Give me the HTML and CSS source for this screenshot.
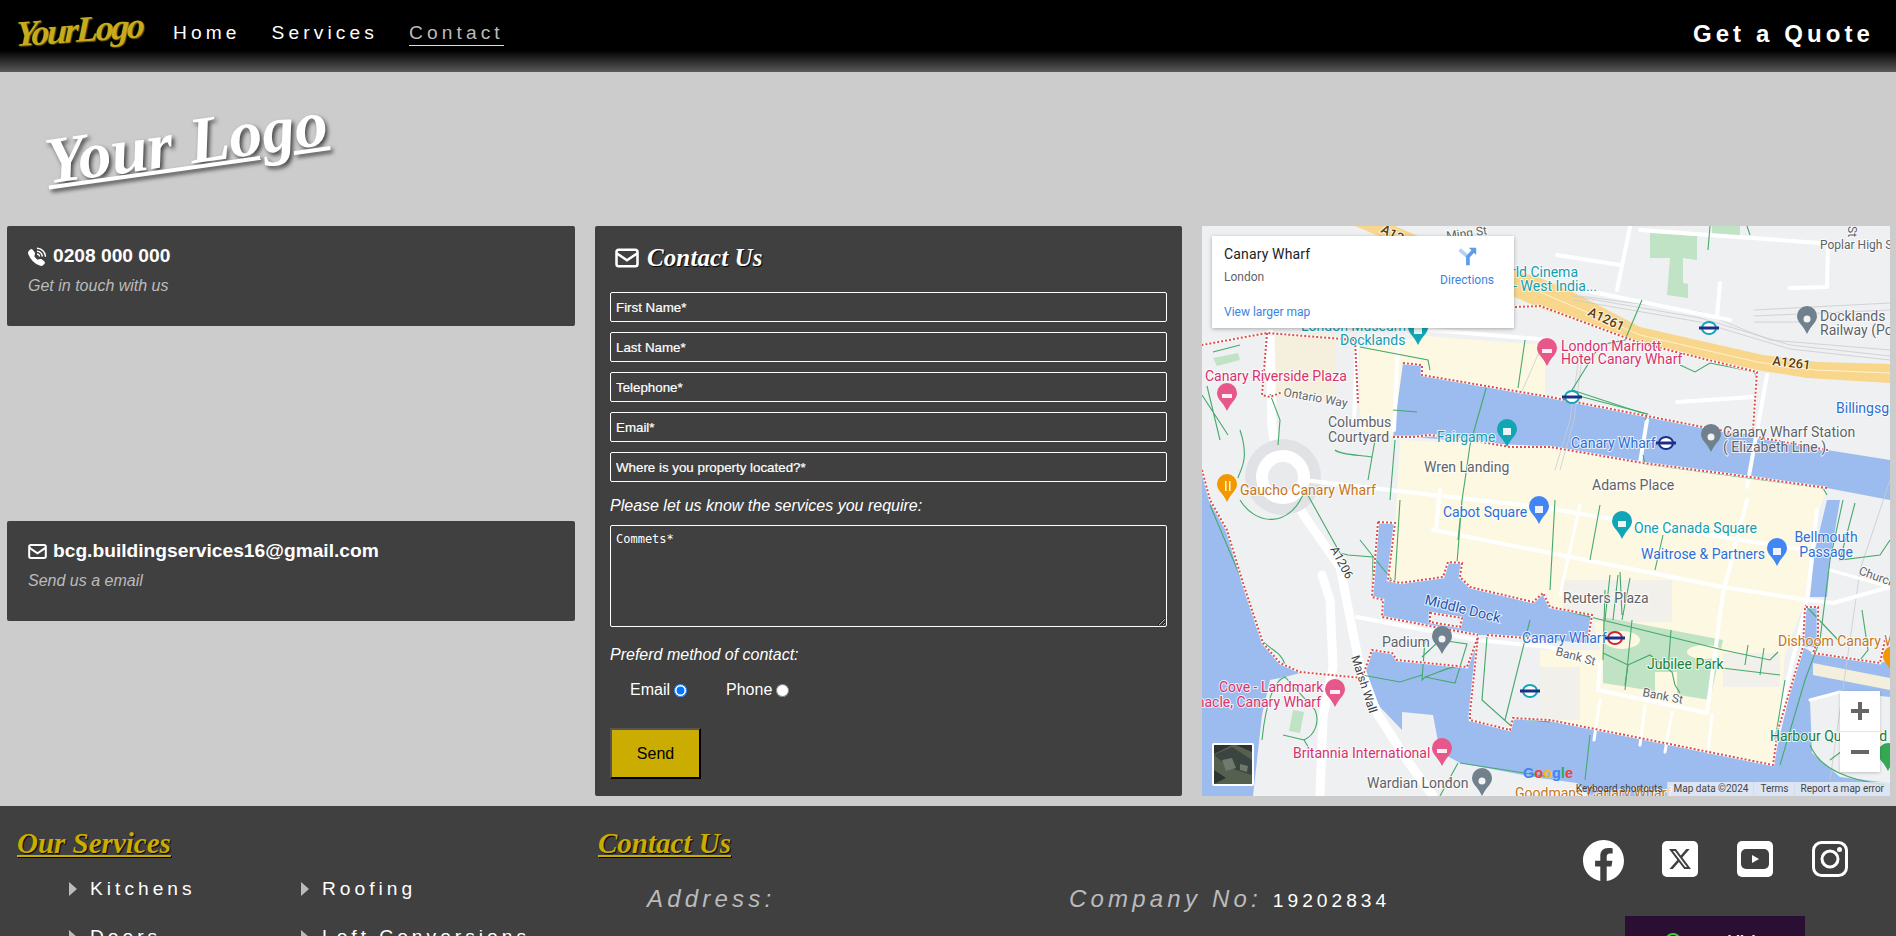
FILE: index.html
```html
<!DOCTYPE html>
<html lang="en">
<head>
<meta charset="utf-8">
<title>Contact</title>
<link rel="stylesheet" href="styles.css">
</head>
<body>
<header class="topbar">
  <a class="toplogo">YourLogo</a>
  <nav class="nav">
    <a>Home</a>
    <a>Services</a>
    <a class="active">Contact</a>
  </nav>
  <a class="quote">Get a Quote</a>
</header>

<div class="brand"><span class="biglogo">Your Logo</span></div>

<main class="columns">
  <section class="side">
    <div class="card">
      <h3 class="card-title">
        <svg class="ico" viewBox="0 0 18 18"><path d="M1.885 2.511a1.745 1.745 0 0 1 2.61.163L6.29 4.98c.329.423.445.974.315 1.494l-.547 2.19a.68.68 0 0 0 .178.643l2.457 2.457a.68.68 0 0 0 .644.178l2.189-.547a1.75 1.75 0 0 1 1.494.315l2.306 1.794c.829.645.905 1.87.163 2.611l-1.034 1.034c-.74.74-1.846 1.065-2.877.702a18.6 18.6 0 0 1-7.01-4.42 18.6 18.6 0 0 1-4.42-7.009c-.362-1.03-.037-2.137.703-2.877z"/><path class="arc" d="M8.500 1.200a8 8 0 0 1 8 8M8.500 4a5 5 0 0 1 5 5M8.500 6.700a2.400 2.400 0 0 1 2.400 2.400"/></svg>
        0208 000 000
      </h3>
      <p class="card-sub">Get in touch with us</p>
    </div>
    <div class="card">
      <h3 class="card-title">
        <svg class="ico env" viewBox="0 0 16 16"><rect x="1" y="2.500" width="14" height="11" rx="1.500"/><path d="M1.300 5L8 9.500L14.700 5"/></svg>
        bcg.buildingservices16@gmail.com
      </h3>
      <p class="card-sub">Send us a email</p>
    </div>
  </section>

  <form class="form">
    <h2 class="form-title">
      <svg class="form-ico env" viewBox="0 0 16 16"><rect x="1" y="2.500" width="14" height="11" rx="1.500"/><path d="M1.300 5L8 9.500L14.700 5"/></svg>
      <span class="script">Contact Us</span>
    </h2>
    <input class="field" type="text" placeholder="First Name*">
    <input class="field" type="text" placeholder="Last Name*">
    <input class="field" type="text" placeholder="Telephone*">
    <input class="field" type="text" placeholder="Email*">
    <input class="field" type="text" placeholder="Where is you property located?*">
    <p class="form-label first">Please let us know the services you require:</p>
    <textarea class="comments" placeholder="Commets*"></textarea>
    <p class="form-label second">Preferd method of contact:</p>
    <div class="radios">
      <label class="radio">Email <input type="radio" name="m" checked></label>
      <label class="radio">Phone <input type="radio" name="m"></label>
    </div>
    <button class="send" type="button">Send</button>
  </form>

  <section class="map">
    <svg class="map-svg" viewBox="1202 226 688 570" width="688" height="570">
      <defs>
        <path id="pin" d="M0-14a10 10 0 0 1 10 10c0 6.500-6 9-10 18c-4-9-10-11.500-10-18a10 10 0 0 1 10-10z"/>
        <g id="tube"><ellipse cx="0" cy="0" rx="7" ry="6" class="tube-ring"/><rect x="-10" y="-1.500" width="20" height="3" class="tube-bar"/></g>
        <g id="bounds">
          <path d="M1267 333L1262 395L1270 397L1282 392M1358 403L1355 340L1267 333L1202 345"/>
          <path d="M1403 363L1422 365L1422 375L1550 397L1703 427L1827 450L1827 452M1393 437L1413 437L1430 435L1487 443L1510 447L1550 447L1643 463L1750 477L1827 488"/>
          <path d="M1443 310L1540 306L1640 343L1757 372L1753 430"/>
          <path d="M1202 470L1210 500L1227 530L1243 583L1263 643L1280 663L1300 672L1362 678L1372 650L1392 653L1397 660L1427 663L1467 667L1478 637L1470 713L1470 720L1510 730L1513 718L1550 720L1640 738L1773 765L1778 730L1793 680L1803 647L1805 607L1818 607L1818 640L1813 653L1880 663L1885 640"/>
          <path d="M1378 522L1395 523L1388 580L1400 583L1443 577L1448 562L1462 563L1460 577L1470 587L1533 602L1543 593L1550 607L1592 615L1588 640M1378 522L1372 597L1383 600L1382 617L1478 635M1487 635L1550 640"/>
          <path d="M1430 613L1462 618L1460 627L1430 622Z"/>
        </g>
      </defs>

      <rect class="land" x="1202" y="226" width="688" height="570"/>
      <polygon class="tan" points="1267,333 1335,333 1335,395 1270,397"/>
      <polygon class="beige" points="1360,348 1425,336 1545,345 1545,395 1422,375 1422,365 1403,363 1395,425 1393,437 1360,430"/>
      <polygon class="beige" points="1400,440 1550,447 1643,463 1750,477 1827,488 1812,530 1805,600 1785,655 1775,765 1700,755 1600,735 1540,722 1540,650 1600,650 1592,615 1550,607 1547,593 1533,602 1470,587 1460,577 1443,577 1400,583 1388,580 1395,523"/>
      <rect class="land-soft" x="1563" y="580" width="109" height="42"/>
      <rect class="land-soft" x="1540" y="667" width="40" height="53"/>
      <rect class="land-soft" x="1723" y="653" width="57" height="34"/>
      <polygon class="park" points="1603,617 1723,640 1710,700 1603,683"/>
      <ellipse class="beige" cx="1622" cy="640" rx="18" ry="9"/>
      <ellipse class="beige" cx="1705" cy="652" rx="18" ry="7"/>
      <rect class="beige" x="1655" y="672" width="22" height="22"/>
      <polygon class="park" points="1650,233 1697,236 1697,260 1683,258 1683,283 1688,284 1688,298 1667,295 1670,258 1650,258"/>
      <rect class="park" x="1712" y="226" width="28" height="9"/>
      <polygon class="park" points="1213,358 1238,353 1240,360 1217,366"/>
      <polygon class="park" points="1293,710 1304,712 1300,733 1289,731"/>

      <polygon class="water" points="1403,363 1422,365 1422,375 1550,397 1703,427 1827,450 1890,460 1890,500 1827,488 1750,477 1643,463 1550,447 1487,443 1413,437 1393,437"/>
      <polygon class="water" points="1202,470 1210,500 1227,530 1243,583 1263,643 1280,663 1300,673 1285,677 1270,680 1262,715 1253,796 1202,796"/>
      <polygon class="water" points="1378,522 1395,523 1388,580 1400,583 1443,577 1448,562 1462,563 1460,577 1470,587 1533,602 1543,593 1550,607 1592,615 1588,643 1550,640 1487,635 1478,635 1382,617 1383,600 1372,597"/>
      <polygon class="water" points="1372,650 1392,653 1397,660 1427,663 1467,667 1478,637 1470,713 1470,720 1510,730 1513,718 1550,720 1640,738 1773,765 1793,680 1803,647 1813,653 1880,663 1890,660 1890,697 1840,692 1810,700 1812,753 1840,777 1890,783 1890,796 1590,796 1577,783 1540,778 1460,763 1440,752 1433,715 1402,712 1402,730 1380,707 1363,677"/>
      <polygon class="water" points="1827,500 1840,500 1830,560 1827,597 1810,597 1815,550"/>
      <polygon class="water" points="1805,607 1818,607 1818,647 1805,647"/>
      <polygon class="land" points="1430,613 1462,618 1460,627 1430,622"/>
      <polygon class="pier" points="1813,663 1890,678 1890,690 1813,675"/>

      <polygon class="motorway" points="1355,226 1395,226 1450,250 1540,278 1573,292 1640,327 1763,355 1817,362 1890,364 1890,383 1807,378 1757,370 1640,343 1540,308 1510,295 1440,262"/>
      <polyline class="motorway-line" points="1540,292 1640,335 1757,362 1815,370 1890,373"/>

      <g class="rail">
        <path d="M1573 296L1700 318L1790 345L1890 356M1573 300L1700 322L1790 349L1890 360M1580 296L1700 312L1770 340L1890 350"/>
        <path d="M1754 310L1890 303M1754 316L1890 310M1754 322L1800 322"/>
        <path d="M1580 350L1570 420L1555 470M1583 350L1574 420L1560 470"/>
        <path d="M1890 480L1860 570L1830 780M1540 350L1520 396"/>
      </g>

      <g class="road road-wide">
        <path d="M1270 334L1272 427L1280 477L1307 520L1340 567L1353 633L1360 667L1377 713L1407 760L1433 796"/>
        <path d="M1322 575L1330 600L1333 667L1323 717L1320 796"/>
      </g>
      <circle class="ring" cx="1283" cy="477" r="38"/>
      <circle class="ring-in" cx="1283" cy="477" r="27"/>
      <circle class="ring-c" cx="1283" cy="477" r="15"/>
      <g class="road">
        <path d="M1303 480L1433 495L1540 507L1740 540L1820 552"/>
        <path d="M1433 530L1550 553L1723 587L1807 600L1833 603L1890 587"/>
        <path d="M1357 617L1477 640L1550 647L1600 663L1598 690L1707 713L1723 593L1747 500"/>
        <path d="M1817 510L1807 600L1780 713"/>
        <path d="M1440 490L1436 530M1647 420L1640 463M1767 375L1747 487"/>
        <path d="M1630 227L1617 290M1557 255L1620 265M1583 290L1730 320M1640 230L1820 243M1828 243L1827 287L1790 288M1720 283L1717 317"/>
        <path d="M1677 402L1753 397M1430 330L1550 340M1398 345L1394 430M1357 348L1354 420"/>
      </g>
      <g class="road road-thin">
        <path d="M1600 700L1594 740M1645 706L1640 745M1672 712L1665 752M1712 715L1708 752M1580 505L1560 595M1830 570L1890 587M1810 700L1840 692"/>
      </g>

      <g class="paths">
        <path d="M1240 500C1255 525 1290 530 1305 490L1340 553L1348 555L1373 557L1372 597M1360 540L1392 580"/>
        <path d="M1202 395L1228 435M1207 386L1220 440M1213 352L1240 345M1240 430C1250 460 1240 470 1238 478"/>
        <path d="M1270 394L1280 420L1278 445M1335 450C1340 455 1360 455 1372 457M1375 440L1368 480M1395 440L1390 500"/>
        <path d="M1360 347L1428 360L1430 370M1525 340L1518 388M1487 385L1470 445M1417 412L1393 410"/>
        <path d="M1470 445L1465 480L1462 500L1458 540M1400 500L1395 580M1462 500L1457 563"/>
        <path d="M1210 505L1243 583L1262 640C1270 650 1282 652 1285 665"/>
        <path d="M1262 740C1266 700 1275 680 1285 677L1315 710C1320 722 1315 735 1304 740M1283 735L1304 740L1310 750"/>
        <path d="M1425 640L1422 680L1425 677L1455 683L1467 644L1440 640L1422 657M1425 677C1440 673 1447 665 1467 667M1422 675L1400 682L1362 675"/>
        <path d="M1487 637L1482 700L1510 725L1513 718L1550 722M1530 620L1505 720"/>
        <path d="M1458 763L1440 796M1460 763L1550 777"/>
        <path d="M1555 500L1550 590M1600 505L1590 560M1663 535L1655 570"/>
        <path d="M1550 607L1723 650L1770 660L1778 652M1605 590L1603 660M1632 620L1625 690M1671 630L1668 670M1748 645L1745 665M1764 648L1760 675"/>
        <path d="M1603 653L1628 665L1650 655L1672 672L1675 685L1680 693M1722 668L1780 675M1628 665L1625 685"/>
        <path d="M1610 575L1605 620M1618 575L1613 620M1620 572L1622 615M1630 578L1622 620"/>
        <path d="M1843 500L1830 560L1820 640L1805 680L1780 765M1855 503L1840 560L1880 555L1890 540"/>
        <path d="M1862 610L1868 650L1860 660M1838 640L1805 605M1785 680L1775 740"/>
        <path d="M1810 745C1820 770 1850 780 1885 785M1830 760L1850 745L1890 755M1590 735L1585 780"/>
        <path d="M1710 226L1708 250M1747 226L1750 235M1642 300L1625 340L1600 345L1572 390L1648 415L1645 420"/>
        <path d="M1680 365L1695 372L1710 363L1755 372L1757 385M1643 455L1645 464L1823 488L1827 495M1575 395L1648 414"/>
      </g>

      <use href="#bounds" class="bd-under"/>
      <use href="#bounds" class="bd"/>

      <text class="t sm gray" transform="translate(1447 240) rotate(-8)">Ming St</text>
      <text class="t brown" transform="translate(1380 232) rotate(28)">A1261</text>
      <text class="t teal" x="1578" y="277" text-anchor="end">World Cinema</text>
      <text class="t teal" x="1597" y="291" text-anchor="end">- West India...</text>
      <text class="t teal" x="1301" y="331">London Museum</text>
      <text class="t teal" x="1340" y="345">Docklands</text>
      <text class="t pink" x="1205" y="381">Canary Riverside Plaza</text>
      <text class="t sm gray" transform="translate(1283 396) rotate(10)">Ontario Way</text>
      <text class="t gray" x="1328" y="427">Columbus</text>
      <text class="t gray" x="1328" y="442">Courtyard</text>
      <text class="t teal" x="1437" y="442">Fairgame</text>
      <text class="t gray" x="1424" y="472">Wren Landing</text>
      <text class="t orange" x="1240" y="495">Gaucho Canary Wharf</text>
      <text class="t sm gray" x="1820" y="249">Poplar High St</text>
      <text class="t sm gray" transform="translate(1848 226) rotate(90)">St</text>
      <text class="t gray" x="1820" y="321">Docklands</text>
      <text class="t gray" x="1820" y="335">Railway (Poplar)</text>
      <text class="t brown" transform="translate(1587 315) rotate(25)">A1261</text>
      <text class="t brown" transform="translate(1772 365) rotate(7)">A1261</text>
      <text class="t pink" x="1561" y="351">London Marriott</text>
      <text class="t pink" x="1561" y="364">Hotel Canary Wharf</text>
      <text class="t blue" x="1836" y="413">Billingsgate</text>
      <text class="t blue" x="1571" y="448">Canary Wharf</text>
      <text class="t gray" x="1723" y="437">Canary Wharf Station</text>
      <text class="t gray" x="1723" y="452">( Elizabeth Line )</text>
      <text class="t gray" x="1592" y="490">Adams Place</text>
      <text class="t blue" x="1443" y="517">Cabot Square</text>
      <text class="t sm dark" transform="translate(1330 549) rotate(62)">A1206</text>
      <text class="t navy" transform="translate(1424 604) rotate(14)">Middle Dock</text>
      <text class="t gray" x="1382" y="647">Padium</text>
      <text class="t blue" x="1522" y="643">Canary Wharf</text>
      <text class="t sm dark" transform="translate(1351 657) rotate(72)">Marsh Wall</text>
      <text class="t pink" x="1219" y="692">Cove - Landmark</text>
      <text class="t pink" x="1321" y="707" text-anchor="end">Pinnacle, Canary Wharf</text>
      <text class="t pink" x="1293" y="758">Britannia International</text>
      <text class="t gray" x="1367" y="788">Wardian London</text>
      <text class="t orange" x="1515" y="798">Goodmans Canary Wharf</text>
      <text class="t teal" x="1634" y="533">One Canada Square</text>
      <text class="t blue" x="1641" y="559">Waitrose &amp; Partners</text>
      <text class="t blue" x="1826" y="542" text-anchor="middle">Bellmouth</text>
      <text class="t blue" x="1826" y="557" text-anchor="middle">Passage</text>
      <text class="t sm gray" transform="translate(1858 574) rotate(20)">Church St</text>
      <text class="t gray" x="1563" y="603">Reuters Plaza</text>
      <text class="t sm gray" transform="translate(1555 655) rotate(15)">Bank St</text>
      <text class="t sm gray" transform="translate(1642 696) rotate(11)">Bank St</text>
      <text class="t green" x="1647" y="669">Jubilee Park</text>
      <text class="t orange" x="1778" y="646">Dishoom Canary Wharf</text>
      <text class="t green" x="1770" y="741">Harbour Quay Yard</text>

      <use href="#pin" class="pin-teal" x="1418" y="331"/>
      <use href="#pin" class="pin-teal" x="1507" y="433"/>
      <use href="#pin" class="pin-teal" x="1622" y="525"/>
      <use href="#pin" class="pin-pink" x="1227" y="397"/>
      <use href="#pin" class="pin-pink" x="1547" y="352"/>
      <use href="#pin" class="pin-pink" x="1335" y="693"/>
      <use href="#pin" class="pin-pink" x="1442" y="752"/>
      <use href="#pin" class="pin-orange" x="1227" y="488"/>
      <use href="#pin" class="pin-orange" x="1893" y="660"/>
      <use href="#pin" class="pin-gray" x="1807" y="320"/>
      <use href="#pin" class="pin-gray" x="1711" y="438"/>
      <use href="#pin" class="pin-gray" x="1442" y="640"/>
      <use href="#pin" class="pin-gray" x="1482" y="782"/>
      <use href="#pin" class="pin-blue" x="1539" y="510"/>
      <use href="#pin" class="pin-blue" x="1777" y="552"/>
      <use href="#pin" class="pin-green" x="1888" y="757"/>
      <g class="pin-mark">
        <circle cx="1807" cy="319" r="3.500"/><circle cx="1711" cy="437" r="3.500"/><circle cx="1442" cy="639" r="3.500"/><circle cx="1482" cy="781" r="3.500"/>
        <rect x="1414" y="327" width="8" height="7"/><rect x="1503" y="428" width="8" height="7"/><rect x="1618" y="521" width="8" height="6"/>
        <rect x="1222" y="394" width="10" height="4"/><rect x="1542" y="349" width="10" height="4"/><rect x="1330" y="690" width="10" height="4"/><rect x="1437" y="749" width="10" height="4"/>
        <rect x="1225" y="481" width="1.500" height="10"/><rect x="1229" y="481" width="1.500" height="10"/>
        <rect x="1535" y="506" width="8" height="7"/><rect x="1773" y="548" width="8" height="7"/>
      </g>
      <use href="#tube" class="tube-t" x="1709" y="328"/>
      <use href="#tube" class="tube-t" x="1572" y="397"/>
      <use href="#tube" class="tube-t" x="1530" y="691"/>
      <use href="#tube" class="tube-v" x="1666" y="443"/>
      <use href="#tube" class="tube-r" x="1615" y="638"/>

      <text class="gl" x="1523" y="778"><tspan class="g-b">G</tspan><tspan class="g-r">o</tspan><tspan class="g-y">o</tspan><tspan class="g-b">g</tspan><tspan class="g-g">l</tspan><tspan class="g-r">e</tspan></text>

      <rect class="thumb-frame" x="1212" y="743" width="42" height="43" rx="2"/>
      <rect class="thumb" x="1214" y="745" width="38" height="39"/>
      <polygon class="thumb-a" points="1214,755 1232,747 1252,760 1252,775 1230,768"/>
      <polygon class="thumb-b" points="1222,760 1232,758 1236,768 1226,771"/>
      <polygon class="thumb-b" points="1240,764 1248,766 1247,772 1240,770"/>
      <polygon class="thumb-c" points="1214,745 1232,745 1214,754"/>
      <polygon class="thumb-c" points="1236,745 1252,745 1252,752"/>
      <polygon class="thumb-c" points="1214,770 1226,778 1214,784"/>
    </svg>

    <div class="place">
      <div class="place-info">
        <div class="place-name">Canary Wharf</div>
        <div class="place-area">London</div>
        <a class="place-link">View larger map</a>
      </div>
      <div class="place-dir">
        <svg class="dir-ico" viewBox="0 0 24 24"><path class="dir-a" d="M4 5L13 13"/><path class="dir-b" d="M13 22V13L20 5"/><path class="dir-h" d="M14 3H22V11Z"/></svg>
        <span>Directions</span>
      </div>
    </div>

    <div class="zoomer">
      <svg class="zoom-btn" viewBox="0 0 40 40"><path d="M11 20H29M20 11V29"/></svg>
      <svg class="zoom-btn" viewBox="0 0 40 40"><path d="M11 20H29"/></svg>
    </div>

    <div class="attrib">
      <span>Keyboard shortcuts</span>
      <span>Map data ©2024</span>
      <span>Terms</span>
      <span>Report a map error</span>
    </div>
  </section>
</main>

<footer class="footer">
  <section class="f-services">
    <h2 class="f-title">Our Services</h2>
    <ul class="f-list">
      <li>Kitchens</li>
      <li>Roofing</li>
      <li>Doors</li>
      <li>Loft Conversions</li>
    </ul>
  </section>
  <section class="f-contact">
    <h2 class="f-title">Contact Us</h2>
    <div class="f-info">
      <div class="f-key">Address:</div>
      <div class="f-key">Company No: <span class="f-val">19202834</span></div>
    </div>
  </section>
  <section class="f-social">
    <div class="socials">
      <svg class="soc soc-fb" viewBox="0 0 16 16"><path d="M16 8.049c0-4.446-3.582-8.05-8-8.05C3.58 0-.002 3.603-.002 8.05c0 4.017 2.926 7.347 6.75 7.951v-5.625h-2.03V8.05H6.75V6.275c0-2.017 1.195-3.131 3.022-3.131.876 0 1.791.157 1.791.157v1.98h-1.009c-.993 0-1.303.621-1.303 1.258v1.51h2.218l-.354 2.326H9.25V16c3.824-.604 6.75-3.934 6.75-7.951"/></svg>
      <svg class="soc" viewBox="0 0 36 36"><rect width="36" height="36" rx="5"/><path class="soc-dark" transform="translate(7 7) scale(1.375)" d="M12.600.750h2.454l-5.360 6.142L16 15.250h-4.937l-3.867-5.070-4.425 5.070H.316l5.733-6.570L0 .750h5.063l3.495 4.633L12.601.750Zm-.86 13.028h1.360L4.323 2.145H2.865z"/></svg>
      <svg class="soc" viewBox="0 0 36 36"><rect width="36" height="36" rx="5"/><rect class="soc-dark" x="4" y="8" width="28" height="20" rx="5"/><path d="M15 14L22 18L15 22Z"/></svg>
      <svg class="soc" viewBox="0 0 36 36"><rect class="soc-line" x="1.500" y="1.500" width="33" height="33" rx="8"/><circle class="soc-line" cx="18" cy="18" r="8"/><circle cx="27.500" cy="8.500" r="2.500"/></svg>
    </div>
    <div class="badge"><span class="badge-dot"></span>SS Publish</div>
  </section>
</footer>
</body>
</html>
```
FILE: styles.css
```css
* { box-sizing: border-box; }
html, body { margin: 0; height: 936px; overflow: hidden; }
body { background: #ccc; font-family: "Liberation Sans", Arial, sans-serif; color: #fff; }

.topbar {
  height: 72px;
  display: flex;
  align-items: center;
  padding: 0 22px 4px 16px;
  background: linear-gradient(#000 70%, #5a5a5a 100%);
}
.toplogo {
  width: 157px;
  font: italic 700 36px/1 "Liberation Serif", serif;
  letter-spacing: -2.4px;
  color: #c9aa1c;
  transform: rotate(-4deg) skewX(-6deg);
  transform-origin: 0 50%;
  text-shadow: 1px 1px 1px #6b5a00;
}
.nav { display: flex; gap: 31px; font-size: 19.2px; letter-spacing: 4.1px; }
.nav a { padding-bottom: 1px; line-height: 22px; }
.nav .active { color: #bbb; border-bottom: 1px solid #ddd; }
.quote { margin-left: auto; font-size: 24px; font-weight: 700; letter-spacing: 4.1px; }

.brand { height: 154px; padding: 34px 0 0 44px; }
.biglogo {
  display: inline-block;
  font: italic 700 66px/1.1 "Liberation Serif", serif;
  color: #fff;
  text-decoration: underline;
  text-decoration-thickness: 4px;
  text-underline-offset: 2px;
  text-shadow: 2px 3px 4px #444;
  transform: rotate(-8deg);
  white-space: nowrap;
}

.columns {
  display: grid;
  grid-template-columns: 568px 587px 688px;
  gap: 20px;
  padding: 0 6px 0 7px;
  height: 570px;
}
.side { display: flex; flex-direction: column; gap: 195px; }
.card { height: 100px; padding: 18px 21px; background: #404040; border-radius: 2px; }
.card-title { margin: 0; display: flex; align-items: center; gap: 6px; font-size: 19.2px; line-height: 24px; font-weight: 700; }
.ico { width: 19px; height: 19px; fill: #fff; flex: none; }
.arc { fill: none; stroke: #fff; stroke-width: 1.4; }
.env { fill: none; stroke: #fff; stroke-width: 1.7; }
.card-sub { margin: 9px 0 0; font-size: 16px; line-height: 18px; font-style: italic; color: #bbb; }

.form { display: flex; flex-direction: column; align-items: flex-start; padding: 0 15px; background: #404040; border-radius: 2px; }
.form-title { height: 66px; margin: 0; padding: 18px 0 0 5px; display: flex; align-items: flex-start; gap: 8px; font-weight: 400; }
.form-ico { width: 24px; height: 24px; flex: none; margin-top: 2px; fill: none; }
.script { font: italic 700 25px/28px "Liberation Serif", serif; color: #fff; text-shadow: 1px 1px 1px #000; letter-spacing: .1px; }
.field {
  width: 557px; height: 30px; flex: none; margin-bottom: 10px; padding: 0 5px;
  border: 1px solid #fff; border-radius: 2px; background: transparent; color: #fff;
  font: 13.33px "Liberation Sans", Arial, sans-serif;
}
.field::placeholder { color: #fff; opacity: 1; -webkit-text-stroke: .2px #fff; }
.form-label { margin: 0; font-size: 16px; line-height: 18px; font-style: italic; color: #fff; }
.form-label.first { margin-top: 5px; margin-bottom: 10px; }
.form-label.second { margin-top: 19px; }
.comments {
  width: 557px; height: 102px; flex: none; padding: 6px 5px;
  border: 1px solid #fff; border-radius: 2px; background: transparent; color: #fff;
  font: 12px "DejaVu Sans Mono", monospace;
}
.comments::placeholder { color: #fff; opacity: 1; }
.radios { display: flex; gap: 39px; margin: 17px 0 0 20px; height: 18px; }
.radio { display: flex; align-items: center; gap: 4px; font-size: 16px; line-height: 18px; color: #fff; }
.radio input { margin: 0; width: 13px; height: 13px; }
.send {
  width: 91px; height: 51px; margin-top: 29px;
  background: #cbac00; color: #000; font: 16px "Liberation Sans", Arial, sans-serif;
  border: 2px outset #555; border-color: #555 #000 #000 #555;
}

.map { position: relative; overflow: hidden; height: 570px; }
.map-svg { display: block; }
.land { fill: #eef0f2; }
.land-soft { fill: #f1f0ea; }
.tan { fill: #f5f0dd; }
.beige { fill: #fdf8e2; }
.park { fill: #bfe3c4; }
.water { fill: #9cbcf0; }
.pier { fill: #f4efdc; }
.motorway { fill: #f8d78c; }
.motorway-line { fill: none; stroke: #fff1cc; stroke-width: 1; }
.rail { fill: none; stroke: #c9ccd1; stroke-width: .8; }
.road { fill: none; stroke: #fff; stroke-width: 4; stroke-linecap: round; stroke-linejoin: round; }
.road-wide { stroke-width: 9; }
.road-thin { stroke-width: 3; }
.ring { fill: #e0e2e5; }
.ring-in { fill: #fff; }
.ring-c { fill: #e8eaec; }
.paths { fill: none; stroke: #45a96b; stroke-width: 1.1; }
.bd-under { fill: none; stroke: #fff; stroke-width: 2.6; }
.bd { fill: none; stroke: #db4f4a; stroke-width: 2; stroke-dasharray: 2 2; }
.t { font: 14px Roboto, sans-serif; paint-order: stroke; stroke: rgba(255,255,255,.75); stroke-width: 2px; }
.sm { font-size: 12px; }
.gray { fill: #5f6368; }
.dark { fill: #3c4043; }
.teal { fill: #129eaf; }
.pink { fill: #d9326b; }
.blue { fill: #2f6fd4; }
.navy { fill: #1a54b0; }
.orange { fill: #c5761a; }
.green { fill: #188038; }
.brown { fill: #5c3a0c; font-weight: 500; font-size: 13px; }
.pin-teal { fill: #12a5b5; }
.pin-pink { fill: #e8578a; }
.pin-orange { fill: #f29900; }
.pin-gray { fill: #70808c; }
.pin-blue { fill: #4285f4; }
.pin-green { fill: #34a853; }
.pin-mark { fill: #fff; opacity: .9; }
.tube-ring { fill: #fff; stroke-width: 2; }
.tube-bar { stroke: none; }
.tube-t { stroke: #12a5b5; fill: #1b2f87; }
.tube-v { stroke: #1b2f87; fill: #1b2f87; }
.tube-r { stroke: #d8202a; fill: #1b2f87; }
.gl { font: 700 14.5px "Liberation Sans", sans-serif; }
.g-b { fill: #4285f4; }
.g-r { fill: #ea4335; }
.g-y { fill: #fbbc05; }
.g-g { fill: #34a853; }
.thumb-frame { fill: #fff; }
.thumb { fill: #56604f; }
.thumb-a { fill: #3a4440; }
.thumb-b { fill: #6f7a6c; }
.thumb-c { fill: #2e3531; }

.place {
  position: absolute; top: 10px; left: 10px; width: 302px; height: 92px;
  display: flex; justify-content: space-between;
  padding: 9px 20px 0 12px;
  background: #fff; box-shadow: 0 1px 4px rgba(0,0,0,.3);
  font-family: Roboto, sans-serif;
}
.place-info { display: flex; flex-direction: column; }
.place-name { font-size: 14px; font-weight: 400; line-height: 18px; letter-spacing: .15px; color: #202124; }
.place-area { margin-top: 6px; font-size: 12px; line-height: 16px; color: #5f6368; }
.place-link { margin-top: 19px; font-size: 12px; line-height: 16px; color: #3a84df; }
.place-dir { display: flex; flex-direction: column; align-items: center; font-size: 12px; line-height: 16px; color: #3a84df; }
.dir-ico { width: 22px; height: 22px; margin-bottom: 5px; }
.dir-a { fill: none; stroke: #b3d0f5; stroke-width: 4; }
.dir-b { fill: none; stroke: #5d9ceb; stroke-width: 4; }
.dir-h { fill: #5d9ceb; }

.zoomer {
  position: absolute; right: 10px; bottom: 24px; width: 40px; height: 81px;
  display: flex; flex-direction: column; gap: 1px;
  background: #e6e6e6; box-shadow: 0 1px 3px rgba(0,0,0,.2);
}
.zoom-btn { display: block; width: 40px; height: 40px; background: #fff; fill: none; stroke: #666; stroke-width: 4; }

.attrib {
  position: absolute; right: 0; bottom: 0; height: 14px;
  display: flex; font: 10px/14px Roboto, sans-serif; color: #444;
}
.attrib span { padding: 0 6px; background: rgba(245,245,245,.72); border-left: 1px solid #d5dbe8; }
.attrib span:first-child { border-left: 0; padding-right: 4px; background: transparent; }
.attrib span:nth-child(2), .attrib span:nth-child(3) { padding-right: 5px; }

.footer {
  margin-top: 10px; height: 130px; padding-left: 17px;
  display: grid; grid-template-columns: 581px 985px 1fr;
  background: #404040; overflow: hidden;
}
.f-title {
  margin: 0; height: 55px; padding-top: 20px;
  font: italic 700 29px/34px "Liberation Serif", serif;
  color: #cbac00; text-decoration: underline; text-shadow: 1px 1px 1px #000;
  white-space: nowrap;
}
.f-list {
  margin: 0; padding: 17px 0 0 52px; list-style: none;
  display: grid; grid-template-columns: 232px 232px; row-gap: 26px;
  font-size: 19.2px; line-height: 22px; letter-spacing: 4px;
}
.f-list li { position: relative; padding-left: 21px; }
.f-list li::before {
  content: ""; position: absolute; left: 0; top: 4px;
  border-left: 8px solid #bbb; border-top: 7px solid transparent; border-bottom: 7px solid transparent;
}
.f-info { display: grid; grid-template-columns: 422px 1fr; padding: 24px 0 0 49px; }
.f-key { font-size: 24px; line-height: 28px; font-style: italic; letter-spacing: 4.2px; color: #bbb; white-space: nowrap; }
.f-val { font-size: 19.2px; font-style: normal; letter-spacing: 4px; color: #fff; }
.f-social { position: relative; }
.socials { display: flex; gap: 39px; padding: 35px 0 0 0; }
.soc { width: 36px; height: 36px; fill: #fff; flex: none; }
.soc-fb { width: 41px; height: 41px; margin-top: -1px; margin-right: -1px; }
.soc-dark { fill: #404040; }
.soc-line { fill: none; stroke: #fff; stroke-width: 3; }
.badge {
  display: flex; gap: 6px; align-items: flex-start;
  width: 180px; height: 40px; margin: 35px 0 0 42px; padding: 17px 0 0 40px;
  background: #2a0f33; color: #fff; font-size: 14px; font-weight: 700; line-height: 16px; white-space: nowrap;
}
.badge-dot { width: 16px; height: 16px; border: 2px solid #35d62f; border-radius: 50%; flex: none; }
```
